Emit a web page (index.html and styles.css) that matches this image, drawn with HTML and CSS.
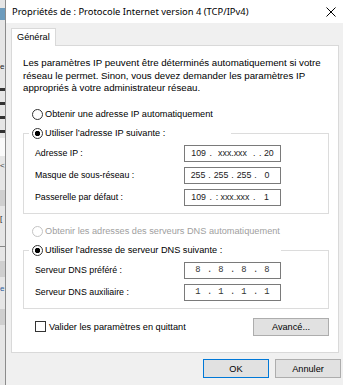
FILE: index.html
```html
<!DOCTYPE html>
<html>
<head>
    <meta charset="utf-8">
    <title>Propriétés de : Protocole Internet version 4 (TCP/IPv4)</title>
    <link rel="stylesheet" href="styles.css">
</head>
<body>
<div class="ecran">
    <div class="arriere">
        <div class="ar-bleu"></div>
        <div class="ar-e">e</div>
        <div class="ar-liste"></div>
        <div class="ar-blanc"></div>
        <div class="ar-fleche">&lt;</div>
        <div class="ar-gris"></div>
        <div class="ar-crochet">[</div>
        <div class="ar-trait"></div>
        <div class="ar-gris"></div>
        <div class="ar-lien">e:</div>
        <div class="ar-gris"></div>
    </div>

    <div class="fenetre">
        <div class="barre-titre">
            <span class="titre">Propriétés de : Protocole Internet version 4 (TCP/IPv4)</span>
            <svg class="fermer" width="10" height="10" viewBox="0 0 10 10">
                <path d="M0.5 0.5 9.5 9.5 M9.5 0.5 0.5 9.5" stroke="#000" stroke-width="1" fill="none"/>
            </svg>
        </div>

        <div class="corps">
            <div class="onglets"><div class="onglet">Général</div></div>

            <div class="panneau">
                <p class="intro">Les paramètres IP peuvent être déterminés automatiquement si votre<br>réseau le permet. Sinon, vous devez demander les paramètres IP<br>appropriés à votre administrateur réseau.</p>

                <div class="radio premier"><span class="rond"></span>Obtenir une adresse IP automatiquement</div>

                <fieldset class="groupe">
                    <legend class="legende-ip"><span class="radio"><span class="rond coche"></span>Utiliser l’adresse IP suivante :</span></legend>
                    <div class="ligne">
                        <label>Adresse IP :</label>
                        <div class="ip"><span class="seg">109</span><i>.</i><span class="seg large">xxx.xxx</span><i>.</i><span class="seg">. 20</span></div>
                    </div>
                    <div class="ligne">
                        <label>Masque de sous-réseau :</label>
                        <div class="ip"><span class="seg">255</span><i>.</i><span class="seg">255</span><i>.</i><span class="seg">255</span><i>.</i><span class="seg">0</span></div>
                    </div>
                    <div class="ligne">
                        <label>Passerelle par défaut :</label>
                        <div class="ip"><span class="seg">109</span><i>.</i><span class="seg large">: xxx.xxx</span><i>.</i><span class="seg">1</span></div>
                    </div>
                </fieldset>

                <div class="radio inactif"><span class="rond"></span>Obtenir les adresses des serveurs DNS automatiquement</div>

                <fieldset class="groupe">
                    <legend class="legende-dns"><span class="radio"><span class="rond coche"></span>Utiliser l’adresse de serveur DNS suivante :</span></legend>
                    <div class="ligne">
                        <label>Serveur DNS préféré :</label>
                        <div class="ip mono"><span class="seg">8</span><i>.</i><span class="seg">8</span><i>.</i><span class="seg">8</span><i>.</i><span class="seg">8</span></div>
                    </div>
                    <div class="ligne">
                        <label>Serveur DNS auxiliaire :</label>
                        <div class="ip mono"><span class="seg">1</span><i>.</i><span class="seg">1</span><i>.</i><span class="seg">1</span><i>.</i><span class="seg">1</span></div>
                    </div>
                </fieldset>

                <div class="bas">
                    <div class="valider"><span class="case"></span>Valider les paramètres en quittant</div>
                    <button class="bouton avance">Avancé...</button>
                </div>
            </div>

            <div class="actions">
                <button class="bouton defaut">OK</button>
                <button class="bouton">Annuler</button>
            </div>
        </div>
    </div>
</div>
</body>
</html>
```

FILE: styles.css
```css
body {margin:0; background:#f0f0f0; color:#000; font-family:"Liberation Sans", Arial, sans-serif; font-size:9.2px;}

.ecran {display:flex; width:343px; height:385px; overflow:hidden;}

/* fenêtre derrière, à peine visible */
.arriere {
    width:5px;
    flex:none;
    overflow:hidden;
    background:#e6e6e6;
    border-right:1px solid #8c8c8c;
    display:flex;
    flex-direction:column;
    font-size:8px;}
.ar-bleu {height:12px; margin-top:8px; background:#6d9cbd;}
.ar-e {margin-top:42px; height:10px; line-height:10px; color:#222;}
.ar-liste {
    height:56px;
    margin-top:10px;
    background:repeating-linear-gradient(#e6e6e6 0 6px, #333 6px 9px, #e6e6e6 9px 14px);}
.ar-blanc {height:18px; background:#fafafa;}
.ar-fleche {height:20px; line-height:20px; color:#444;}
.ar-gris {height:16px; margin-top:14px; background:#cfcfcf;}
.ar-crochet {height:14px; margin-top:6px; line-height:14px; color:#222;}
.ar-trait {height:1px; margin-top:20px; background:#888;}
.ar-lien {height:12px; margin-top:6px; line-height:12px; color:#2a5d9c;}

.fenetre {flex:1; display:flex; flex-direction:column; background:#f0f0f0;}

.barre-titre {
    height:23px;
    padding-left:6px;
    display:flex;
    align-items:center;
    background:#fff;
    font-family:"Noto Sans", "Liberation Sans", sans-serif;
    font-size:9.4px;}
.fermer {margin-left:auto; margin-right:7px;}

.corps {padding:5px 2px 0 5px;}
.onglets {display:flex;}
.onglet {
    position:relative;
    z-index:1;
    width:38px;
    height:17px;
    padding-left:5px;
    margin-bottom:-1px;
    line-height:16px;
    background:#fff;
    border:1px solid #d9d9d9;
    border-bottom:0;}

.panneau {
    box-sizing:border-box;
    width:328px;
    height:308px;
    padding:0 9px 0 11px;
    background:#fff;
    border:1px solid #d9d9d9;}
.intro {margin:0; padding-top:11px; font-size:9.7px; line-height:12.5px; white-space:nowrap;}

.radio {display:flex; align-items:center; height:13px; white-space:nowrap;}
.rond {
    box-sizing:border-box;
    width:11px;
    height:11px;
    margin-right:2px;
    flex:none;
    border:1px solid #333;
    border-radius:50%;
    background:#fff;}
.rond.coche {background:radial-gradient(circle, #000 0 2.4px, #fff 3px);}
.radio.premier {margin:13px 0 0 9px;}
.radio.inactif {margin:11px 0 0 9px; color:#a0a0a0;}
.radio.inactif .rond {border-color:#c4c4c4;}

.groupe {
    margin:6px 0 0;
    padding:0 0 7px 11px;
    min-width:0;
    border:1px solid #dcdcdc;}
.groupe legend {box-sizing:border-box; margin-left:-6px; padding:0 0 0 3px;}
.legende-ip {width:202px;}
.legende-dns {width:252px;}

.ligne {display:flex; align-items:center; height:17px; margin-top:5px; font-size:8.8px;}
.ligne label {width:149px; flex:none;}

.ip {
    box-sizing:border-box;
    width:97px;
    height:17px;
    padding:0 4px;
    display:flex;
    align-items:center;
    border:1px solid #7a7a7a;
    color:#222;}
.ip .seg {flex:1; text-align:center;}
.ip .seg.large {flex:2;}
.ip i {font-style:normal; width:5px; text-align:center;}
.ip.mono {font-family:"Liberation Mono", monospace; color:#333;}

.bas {display:flex; align-items:center; justify-content:space-between; margin-top:9px;}
.valider {display:flex; align-items:center;}
.case {
    box-sizing:border-box;
    width:11px;
    height:11px;
    margin:0 3px 0 12px;
    border:1px solid #333;}

.bouton {
    box-sizing:border-box;
    height:18px;
    padding:0;
    font-family:inherit;
    font-size:9.2px;
    color:#000;
    background:#e1e1e1;
    border:1px solid #adadad;}
.avance {width:76px;}
.actions {display:flex; justify-content:flex-end; gap:6px; padding-top:6px;}
.actions .bouton {width:66px; height:19px;}
.defaut {border-color:#0078d7;}
```
